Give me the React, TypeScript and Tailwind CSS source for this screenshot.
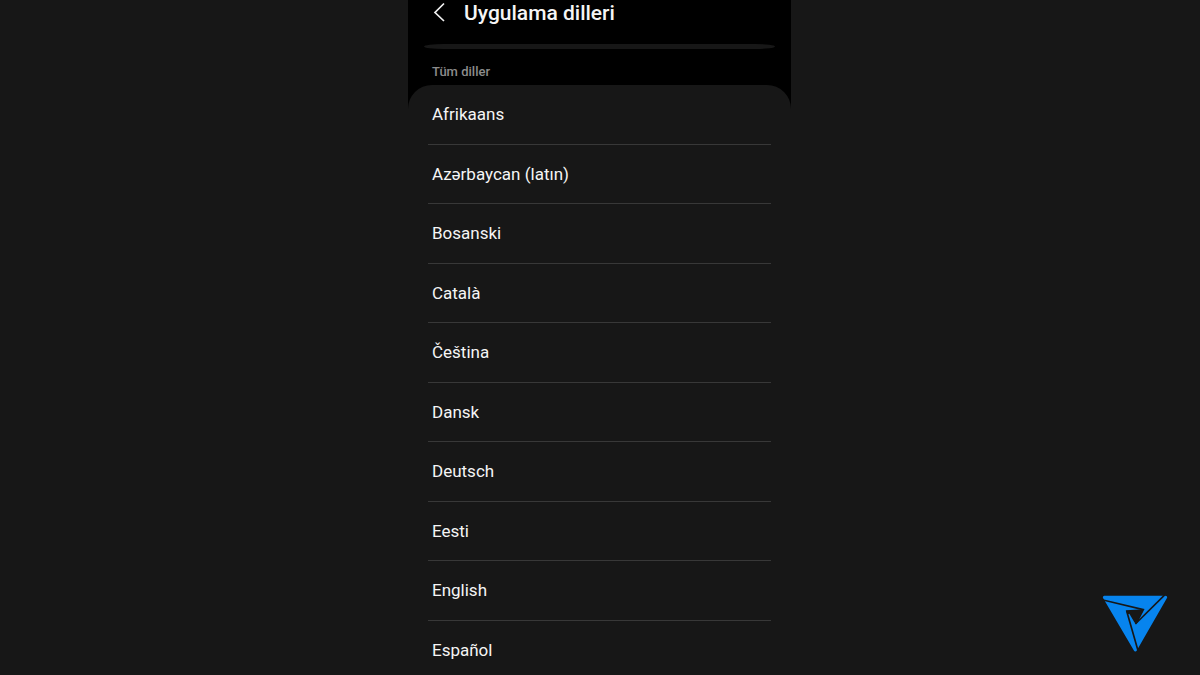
import React, { useState } from "react";

const LANGUAGES = [
  { code: "af", name: "Afrikaans" },
  { code: "az", name: "Azərbaycan (latın)" },
  { code: "bs", name: "Bosanski" },
  { code: "ca", name: "Català" },
  { code: "cs", name: "Čeština" },
  { code: "da", name: "Dansk" },
  { code: "de", name: "Deutsch" },
  { code: "et", name: "Eesti" },
  { code: "en", name: "English" },
  { code: "es", name: "Español" },
];

function BrandMark() {
  return (
    <svg viewBox="21 30 198 174" className="h-[58px] w-[66px]" role="img" aria-label="Logo">
      <path
        d="M28 37 H212 L121 195 Z"
        fill="#0784ee"
        stroke="#0784ee"
        strokeWidth="9"
        strokeLinejoin="round"
      />
      {/* cuts between the three blades */}
      <g fill="none" stroke="#171717" strokeWidth="5">
        <path d="M20 44 L145 74 L125 112" />
        <path d="M214 25 L121 117" />
        <path d="M130 200 L95 78" />
      </g>
      <path d="M92 76 L146 73 L124 118 L118 112 L103 86 L98 88 Z" fill="#171717" />
    </svg>
  );
}

export default function App() {
  const [selected, setSelected] = useState<string | null>(null);

  return (
    <div className="relative h-screen overflow-hidden bg-[#171717] pr-px font-['Roboto','Noto_Sans',sans-serif] text-[#f5f5f5]">
      <main className="mx-auto w-[383px] max-w-full">
        {/* Header, list is scrolled under it */}
        <div className="bg-black">
          <header className="flex h-11 items-start gap-4 pl-6">
            <button type="button" aria-label="Geri" className="flex h-6 w-4 items-center justify-center">
              <svg viewBox="0 0 16 24" className="h-6 w-4" fill="none" stroke="#f0f0f0" strokeWidth="1.7">
                <path d="M12 3.5 L3 12.5 L12 21" />
              </svg>
            </button>
            <h1 className="text-[21px] leading-[26px] font-medium">Uygulama dilleri</h1>
          </header>
          <div className="mx-4 h-[5px] rounded-[24px/3px] bg-[#171717]"></div>
          <h2 className="flex h-9 items-center px-6 pt-[10px] text-[13px] leading-5 font-medium text-[#8c8c8c]">
            Tüm diller
          </h2>
          <div className="h-6 rounded-t-[24px] bg-[#171717]"></div>
        </div>

        {/* All languages */}
        <ul className="-mt-6 grid h-[595px] auto-rows-fr px-5">
          {LANGUAGES.map((lang) => (
            <li key={lang.code} className="border-b border-[#383838] last:border-b-0">
              <button
                type="button"
                lang={lang.code}
                aria-pressed={selected === lang.code}
                onClick={() => setSelected(lang.code)}
                className="h-full w-full px-1 text-left text-[17px] leading-6"
              >
                {lang.name}
              </button>
            </li>
          ))}
        </ul>
      </main>

      <div className="absolute right-8 bottom-[22px]">
        <BrandMark />
      </div>
    </div>
  );
}
